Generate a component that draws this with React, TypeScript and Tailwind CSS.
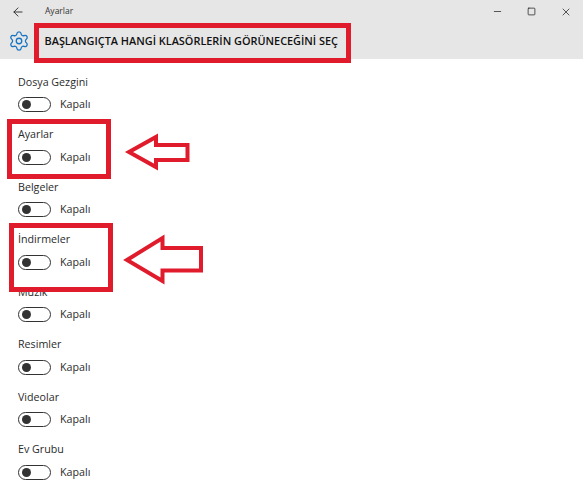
import { ArrowLeft, Minus, Settings, Square, X } from 'lucide-react'

const folders = ['Dosya Gezgini', 'Ayarlar', 'Belgeler', 'İndirmeler', 'Müzik', 'Resimler', 'Videolar', 'Ev Grubu']

function FolderRow({ label }: { label: string }) {
  return (
    <div className="h-[52.5px] pl-[18px]">
      <div className="h-[17px] text-[10.7px] leading-[17px] text-[#2b2b2b]">{label}</div>
      <div className="mt-[6.5px] flex items-center">
        <div className="flex h-[15px] w-[33px] items-center rounded-full border-[1.5px] border-[#333] bg-white pl-[3px]">
          <div className="h-[9px] w-[9px] rounded-full bg-[#333]" />
        </div>
        <span className="ml-[9px] text-[10.7px] leading-[15px] text-[#2b2b2b]">Kapalı</span>
      </div>
    </div>
  )
}

export default function App() {
  return (
    <div className="relative h-[486px] w-[583px] overflow-hidden bg-white font-['Open_Sans','Noto_Sans',sans-serif]">
      {/* Title bar */}
      <div className="flex h-[23px] items-center bg-[#e6e6e6]">
        <ArrowLeft className="ml-[11px] h-[14px] w-[14px] text-[#222]" strokeWidth={1.5} />
        <span className="ml-[20px] text-[8.5px] text-[#333]">Ayarlar</span>
        <div className="ml-auto flex items-center">
          <Minus className="h-[11px] w-[11px] text-[#222]" strokeWidth={1.6} />
          <Square className="ml-[24px] h-[9px] w-[9px] text-[#222]" strokeWidth={2} />
          <X className="ml-[24px] mr-[11px] h-[12px] w-[12px] text-[#222]" strokeWidth={1.5} />
        </div>
      </div>

      {/* Page header */}
      <div className="flex h-[36px] items-center bg-[#e6e6e6]">
        <Settings className="ml-[7.5px] h-[22px] w-[22px] text-[#1674c4]" strokeWidth={1.4} />
        <h1 className="ml-[15px] text-[10.9px] font-semibold leading-none text-[#111]">
          BAŞLANGIÇTA HANGİ KLASÖRLERİN GÖRÜNECEĞİNİ SEÇ
        </h1>
      </div>

      <div className="pt-[14.5px]">
        {folders.map((name) => (
          <FolderRow key={name} label={name} />
        ))}
      </div>

      {/* Annotation boxes */}
      <div className="absolute left-[34px] top-[23px] h-[40px] w-[317px] border-[5px] border-[#e01b2c]" />
      <div className="absolute left-[7px] top-[119px] h-[60px] w-[104px] border-[5px] border-[#e01b2c]" />
      <div className="absolute left-[9px] top-[223px] h-[69px] w-[104px] border-[5px] border-[#e01b2c]" />

      {/* Annotation arrows */}
      <svg className="absolute left-[120px] top-[130px]" width="75" height="45" viewBox="120 130 75 45" fill="none">
        <path d="M129 152 L156 137 V145 H187.5 V160 H156 V167 Z" stroke="#e01b2c" strokeWidth="4" />
      </svg>
      <svg className="absolute left-[118px] top-[230px]" width="90" height="60" viewBox="118 230 90 60" fill="none">
        <path d="M127 260 L162.5 238 V248 H201 V270.5 H162.5 V281 Z" stroke="#e01b2c" strokeWidth="4" />
      </svg>
    </div>
  )
}
